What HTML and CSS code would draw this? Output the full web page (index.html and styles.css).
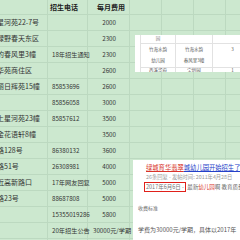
FILE: index.html
```html
<!DOCTYPE html>
<html lang="zh-CN">
<head>
<meta charset="utf-8">
<link rel="stylesheet" href="styles.css">
</head>
<body>
<div class="sheet">
  <div class="row head"><div class="c a"></div><div class="c b hb">招生电话</div><div class="c hn">每月费用</div><div class="c"></div><div class="c"></div><div class="c"></div><div class="c"></div></div>
  <div class="row"><div class="c a">星河苑22-7号</div><div class="c b"></div><div class="c n">2000</div><div class="c"></div><div class="c"></div><div class="c"></div><div class="c"></div></div>
  <div class="row"><div class="c a">绿野春天东区</div><div class="c b"></div><div class="c n">2300</div><div class="c"></div><div class="c"></div><div class="c"></div><div class="c"></div></div>
  <div class="row"><div class="c a">的春风里3幢</div><div class="c b">18年招生通知</div><div class="c n">2300</div><div class="c"></div><div class="c"></div><div class="c"></div><div class="c"></div></div>
  <div class="row"><div class="c a">华苑商住区</div><div class="c b"></div><div class="c n">2600</div><div class="c"></div><div class="c"></div><div class="c"></div><div class="c"></div></div>
  <div class="row"><div class="c a">丽日辉苑15幢</div><div class="c b">85853696</div><div class="c n">2600</div><div class="c"></div><div class="c"></div><div class="c"></div><div class="c"></div></div>
  <div class="row"><div class="c a">：</div><div class="c b">85856058</div><div class="c n">3000</div><div class="c"></div><div class="c"></div><div class="c"></div><div class="c"></div></div>
  <div class="row"><div class="c a">上星河苑23幢</div><div class="c b">85857612</div><div class="c n">3500</div><div class="c"></div><div class="c"></div><div class="c"></div><div class="c"></div></div>
  <div class="row"><div class="c a">金花语轩8幢</div><div class="c b"></div><div class="c n">3500</div><div class="c"></div><div class="c"></div><div class="c"></div><div class="c"></div></div>
  <div class="row"><div class="c a">路128号</div><div class="c b">86380132</div><div class="c n">3600</div><div class="c"></div><div class="c"></div><div class="c"></div><div class="c"></div></div>
  <div class="row"><div class="c a">路51号</div><div class="c b">26308981</div><div class="c n">4000</div><div class="c"></div><div class="c"></div><div class="c"></div><div class="c"></div></div>
  <div class="row"><div class="c a">近高新路口</div><div class="c b">17年网友回复</div><div class="c n">5000</div><div class="c"></div><div class="c"></div><div class="c"></div><div class="c"></div></div>
  <div class="row"><div class="c a">路23号</div><div class="c b">88687808</div><div class="c n">5000</div><div class="c"></div><div class="c"></div><div class="c"></div><div class="c"></div></div>
  <div class="row"><div class="c a"></div><div class="c b">15355019286</div><div class="c n">5800</div><div class="c"></div><div class="c"></div><div class="c"></div><div class="c"></div></div>
  <div class="row"><div class="c a"></div><div class="c b">20年招生公告</div><div class="c over">30000元/学期</div><div class="c"></div><div class="c"></div><div class="c"></div><div class="c"></div></div>
  <div class="row"><div class="c a"></div><div class="c b"></div><div class="c n"></div><div class="c"></div><div class="c"></div><div class="c"></div><div class="c"></div></div>
</div>

<div class="panel-table">
  <div class="prow top"><div class="pc">园</div><div class="pc"></div><div class="pc"></div></div>
  <div class="prow mid"><div class="pc">竹海水韵<br>幼儿园</div><div class="pc">竹海水韵<br>春风里3幢</div><div class="pc">3</div></div>
  <div class="prow low"><div class="pc">西溪华府</div><div class="pc">宝龄园</div><div class="pc">1</div></div>
</div>

<div class="panel-result">
  <div class="result">
    <div class="title"><span class="hl">绿城育华翡翠</span><span class="lk">城幼儿园开始招生了</span></div>
    <div class="meta">26条回复 - 发帖时间: 2011年4月28日</div>
    <div class="date"><span class="mark">2017年6月6日 -</span> 最新<span class="red">幼儿园</span>啊 教育质量</div>
  </div>
  <div class="fee-head">收费标准</div>
  <div class="fee">学费为30000元/学期，具体以2017年</div>
</div>
</body>
</html>
```

FILE: styles.css
```css
:root {
  --grid: #bcd9c0;
}
html, body {
  margin: 0;
  padding: 0;
}
body {
  width: 240px;
  height: 240px;
  overflow: hidden;
  position: relative;
  background: #cce8cf;
  font-family: "Noto Sans CJK SC", "Noto Sans", sans-serif;
  color: #333;
}
.sheet {
  margin-left: -4px;
  width: 262px;
}
.row {
  display: grid;
  grid-template-columns: 52px 40px 42px 32px 32px 32px 32px;
  height: 16px;
}
.row.head {
  height: 15px;
}
.c {
  box-sizing: border-box;
  border-right: 1px solid var(--grid);
  border-bottom: 1px solid var(--grid);
  font-size: 6.2px;
  line-height: 15px;
  white-space: nowrap;
}
.head .c {
  font-size: 7px;
  line-height: 14px;
  font-weight: bold;
  color: #222;
}
.a {
  font-size: 7px;
  padding-left: 1px;
  overflow: hidden;
}
.b {
  padding-left: 4px;
}
.hb {
  padding-left: 2px;
}
.hn {
  padding-left: 9px;
}
.n {
  text-align: right;
  padding-right: 13px;
}
.over {
  padding-left: 5px;
  overflow: visible;
}

/* overlay: fragment of a table */
.panel-table {
  position: absolute;
  left: 135px;
  top: 35px;
  width: 105px;
  height: 37px;
  background: #fff;
  overflow: hidden;
  padding-left: 5px;
  box-sizing: border-box;
}
.prow {
  display: grid;
  grid-template-columns: 35px 37px 40px;
  border-bottom: 1px solid #e2e2e2;
}
.prow.top { height: 8px; }
.prow.mid { height: 23px; }
.prow.low { height: 10px; border-bottom: none; }
.pc {
  box-sizing: border-box;
  border-left: 1px solid #e2e2e2;
  text-align: center;
  font-size: 4.5px;
  line-height: 11px;
  color: #555;
  white-space: nowrap;
}
.top .pc {
  line-height: 7px;
  color: #888;
}
.low .pc {
  line-height: 5px;
}

/* overlay: search result */
.panel-result {
  position: absolute;
  left: 133px;
  top: 160px;
  width: 107px;
  height: 80px;
  background: #fff;
  overflow: hidden;
}
.result {
  padding: 3px 0 0 13px;
  white-space: nowrap;
}
.title {
  font-size: 6.3px;
  line-height: 10px;
}
.hl {
  color: #d8332a;
  text-decoration: underline;
}
.lk {
  color: #2440c8;
  text-decoration: underline;
}
.meta {
  font-size: 5.3px;
  line-height: 9px;
  color: #999;
}
.date {
  font-size: 5.5px;
  line-height: 10px;
  color: #666;
  margin-left: -2px;
}
.mark {
  border: 1px solid #e0201a;
  padding: 0 1px;
  color: #777;
}
.red {
  color: #d8332a;
}
.fee-head {
  margin-top: 11px;
  padding-left: 5px;
  font-size: 5px;
  line-height: 10px;
  color: #666;
}
.fee {
  margin-top: 12px;
  padding-left: 5px;
  font-size: 6px;
  line-height: 10px;
  color: #555;
  white-space: nowrap;
}
```
